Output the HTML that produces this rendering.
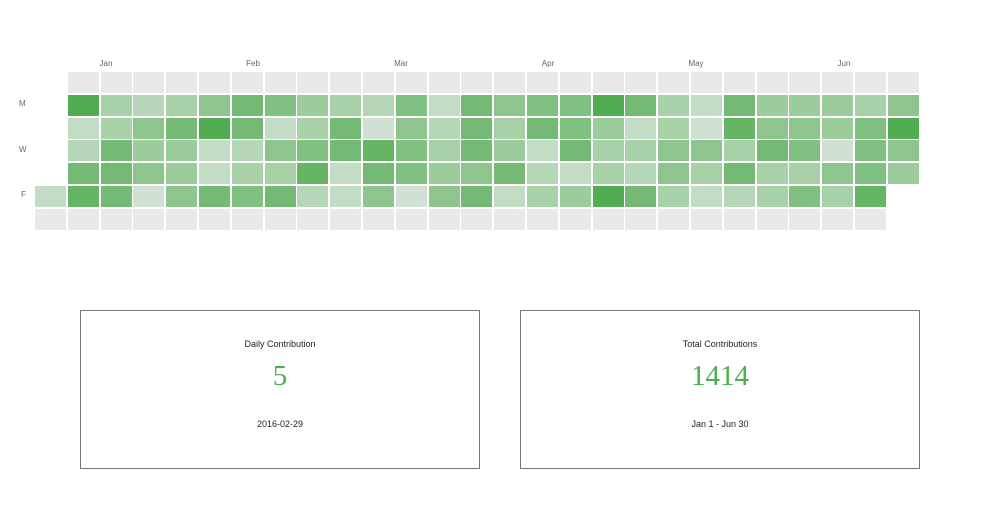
<!DOCTYPE html>
<html><head><meta charset="utf-8"><style>
body{margin:0;width:1000px;height:516px;background:#fff;position:relative;font-family:"Liberation Sans",sans-serif;overflow:hidden}
.c{position:absolute;width:31px;height:21px}
.m{position:absolute;top:59px;font-size:8px;color:#666;transform:translateX(-50%)}
.d{position:absolute;left:19px;font-size:8px;color:#666}
.card{position:absolute;top:310px;width:400px;height:159px;border:1px solid #777;box-sizing:border-box;text-align:center}
.t{position:absolute;top:28px;left:0;right:0;font-size:9px;color:#222}
.n{position:absolute;top:49px;left:0;right:0;font-family:"Liberation Serif",serif;font-size:29px;color:#4cae4c}
.s{position:absolute;top:108px;left:0;right:0;font-size:9px;color:#222}
</style></head><body>
<div class="m" style="left:106px">Jan</div><div class="m" style="left:253px">Feb</div><div class="m" style="left:401px">Mar</div><div class="m" style="left:548px">Apr</div><div class="m" style="left:696px">May</div><div class="m" style="left:844px">Jun</div>
<div class="d" style="top:99px">M</div><div class="d" style="top:145px">W</div><div class="d" style="top:190px;left:21px">F</div>
<div id="g"></div>
<div class="card" style="left:80px"><div class="t">Daily Contribution</div><div class="n">5</div><div class="s">2016-02-29</div></div>
<div class="card" style="left:520px"><div class="t">Total Contributions</div><div class="n">1414</div><div class="s">Jan 1 - Jun 30</div></div>
<script>
var C=['#e8e9e8','#d0e0d2','#c3dcc5','#b6d7b7','#a8d1a8','#9ccb9c','#8ec58e','#80c080','#74ba74','#65b565','#52ad52'];
var R=[
null,
[10,4,3,4,6,8,7,5,4,3,7,2,8,8,6,7,7,10,8,4,2,8,5,5,5,4,6],
[2,4,6,8,10,8,2,4,8,1,6,3,8,8,4,8,7,5,2,4,1,9,6,6,5,7,10],
[3,8,5,5,2,3,6,7,8,9,7,4,8,8,5,2,8,4,4,6,6,4,8,7,1,7,6],
[8,8,6,5,2,4,4,9,2,8,7,5,6,6,8,3,2,4,3,6,4,8,4,4,6,7,5],
[2,9,8,1,6,8,7,8,3,2,6,1,6,8,2,4,5,10,8,4,2,3,4,7,4,9]
];
var h='';
function cell(col,row,lv){var x=Math.round(35+col*32.8),y=Math.round(72+row*22.8);h+='<div class="c" style="left:'+x+'px;top:'+y+'px;background:'+C[lv]+'"></div>';}
for(var c=1;c<=26;c++)cell(c,0,0);
for(var r=1;r<=4;r++){var a=R[r];var vals=a.slice(0,13).concat(a.slice(14));for(var c=1;c<=26;c++)cell(c,r,vals[c-1]);}
for(var c=0;c<=25;c++)cell(c,5,R[5][c]);
for(var c=0;c<=25;c++)cell(c,6,0);
document.getElementById('g').innerHTML=h;
</script>
</body></html>
